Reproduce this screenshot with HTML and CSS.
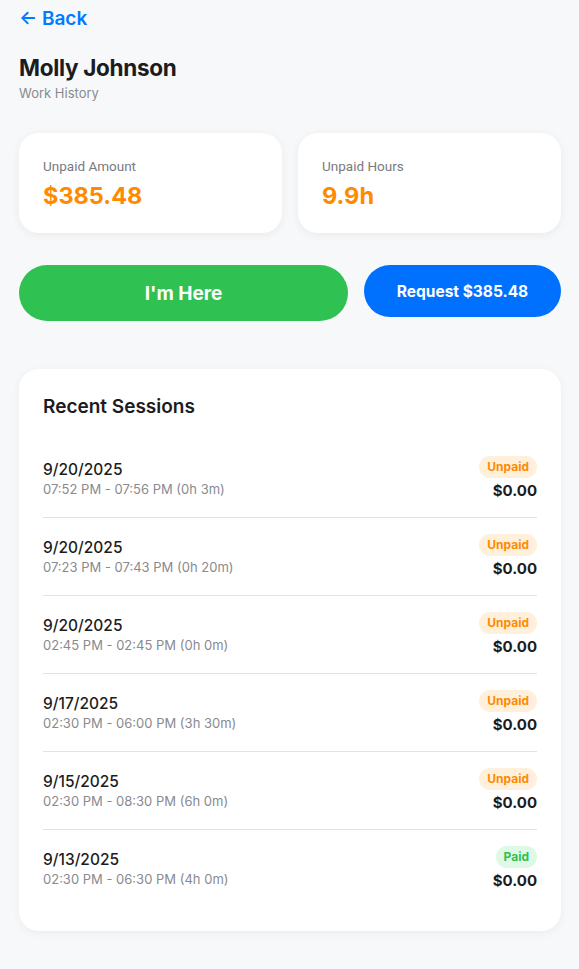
FILE: index.html
```html
<!DOCTYPE html>
<html>
<head>
<meta charset="utf-8">
<link rel="stylesheet" href="styles.css">
</head>
<body>
<div class="page">
  <a class="back"><span class="arrow">←</span> Back</a>
  <h1 class="name">Molly Johnson</h1>
  <div class="subtitle">Work History</div>

  <div class="stats">
    <div class="stat">
      <div class="stat-label">Unpaid Amount</div>
      <div class="stat-value">$385.48</div>
    </div>
    <div class="stat">
      <div class="stat-label">Unpaid Hours</div>
      <div class="stat-value">9.9h</div>
    </div>
  </div>

  <div class="actions">
    <button class="btn btn-green">I'm Here</button>
    <button class="btn btn-blue">Request $385.48</button>
  </div>

  <div class="sessions">
    <h2 class="sessions-title">Recent Sessions</h2>
    <div class="row">
      <div class="left"><div class="date">9/20/2025</div><div class="time">07:52 PM - 07:56 PM (0h 3m)</div></div>
      <div class="right"><span class="badge unpaid">Unpaid</span><div class="amount">$0.00</div></div>
    </div>
    <div class="row">
      <div class="left"><div class="date">9/20/2025</div><div class="time">07:23 PM - 07:43 PM (0h 20m)</div></div>
      <div class="right"><span class="badge unpaid">Unpaid</span><div class="amount">$0.00</div></div>
    </div>
    <div class="row">
      <div class="left"><div class="date">9/20/2025</div><div class="time">02:45 PM - 02:45 PM (0h 0m)</div></div>
      <div class="right"><span class="badge unpaid">Unpaid</span><div class="amount">$0.00</div></div>
    </div>
    <div class="row">
      <div class="left"><div class="date">9/17/2025</div><div class="time">02:30 PM - 06:00 PM (3h 30m)</div></div>
      <div class="right"><span class="badge unpaid">Unpaid</span><div class="amount">$0.00</div></div>
    </div>
    <div class="row">
      <div class="left"><div class="date">9/15/2025</div><div class="time">02:30 PM - 08:30 PM (6h 0m)</div></div>
      <div class="right"><span class="badge unpaid">Unpaid</span><div class="amount">$0.00</div></div>
    </div>
    <div class="row last">
      <div class="left"><div class="date">9/13/2025</div><div class="time">02:30 PM - 06:30 PM (4h 0m)</div></div>
      <div class="right"><span class="badge paid">Paid</span><div class="amount">$0.00</div></div>
    </div>
  </div>
</div>
</body>
</html>
```

FILE: styles.css
```css
* { box-sizing: border-box; }
html, body { margin: 0; padding: 0; }
body {
  background: #f7f8fa;
  font-family: Inter, "Noto Sans", sans-serif;
  color: #1c1c1e;
}
.page {
  padding: 6px 18px 38px 19px;
}
.back {
  display: inline-block;
  color: #007aff;
  font-size: 19px;
  font-weight: 600;
  line-height: 26px;
}
.arrow { font-weight: 600; }
.name {
  margin: 22px 0 0;
  font-size: 22.5px;
  font-weight: 700;
  line-height: 28px;
  letter-spacing: -0.3px;
}
.subtitle {
  margin-top: 3px;
  font-size: 13px;
  color: #8a8a8e;
  line-height: 16px;
}
.stats {
  display: grid;
  grid-template-columns: 1fr 1fr;
  gap: 16px;
  margin-top: 32px;
}
.stat {
  background: #fff;
  border-radius: 20px;
  height: 100px;
  padding: 25px 24px;
  box-shadow: 0 2px 10px rgba(0,0,0,0.06);
}
.stat-label {
  font-family: Roboto, sans-serif;
  font-size: 13.5px;
  color: #7a7a80;
  line-height: 16px;
}
.stat-value {
  margin-top: 8px;
  font-size: 23.5px;
  font-weight: 700;
  color: #ff8a00;
  line-height: 28px;
}
.actions {
  display: flex;
  gap: 16px;
  margin-top: 32px;
  align-items: flex-start;
}
.btn {
  border: none;
  color: #fff;
  font-family: Inter, sans-serif;
  font-weight: 700;
}
.btn-green {
  flex: 0 0 329px;
  height: 56px;
  border-radius: 28px;
  background: #2fc152;
  font-size: 19px;
}
.btn-blue {
  flex: 1;
  height: 52px;
  border-radius: 26px;
  background: #0070ff;
  font-size: 15.5px;
}
.sessions {
  margin-top: 48px;
  background: #fff;
  border-radius: 20px;
  padding: 26px 24px 23px;
  box-shadow: 0 2px 10px rgba(0,0,0,0.05);
}
.sessions-title {
  margin: 0 0 21px;
  font-size: 19px;
  font-weight: 600;
  line-height: 24px;
}
.row {
  display: flex;
  justify-content: space-between;
  align-items: center;
  height: 78px;
  border-bottom: 1px solid #e2e2e6;
}
.row.last { border-bottom: none; }
.date {
  font-size: 15.5px;
  font-weight: 500;
  line-height: 20px;
}
.time {
  font-size: 13px;
  color: #8a8a8e;
  line-height: 18px;
}
.right {
  display: flex;
  flex-direction: column;
  align-items: flex-end;
  gap: 2px;
}
.badge {
  display: inline-block;
  font-size: 12px;
  font-weight: 700;
  line-height: 22px;
  height: 22px;
  padding: 0 8px;
  border-radius: 11px;
}
.badge.unpaid { background: #fff0dc; color: #ff8a00; }
.badge.paid { background: #e0f8e6; color: #2fc152; }
.amount {
  font-size: 15px;
  font-weight: 700;
  line-height: 22px;
}
```
